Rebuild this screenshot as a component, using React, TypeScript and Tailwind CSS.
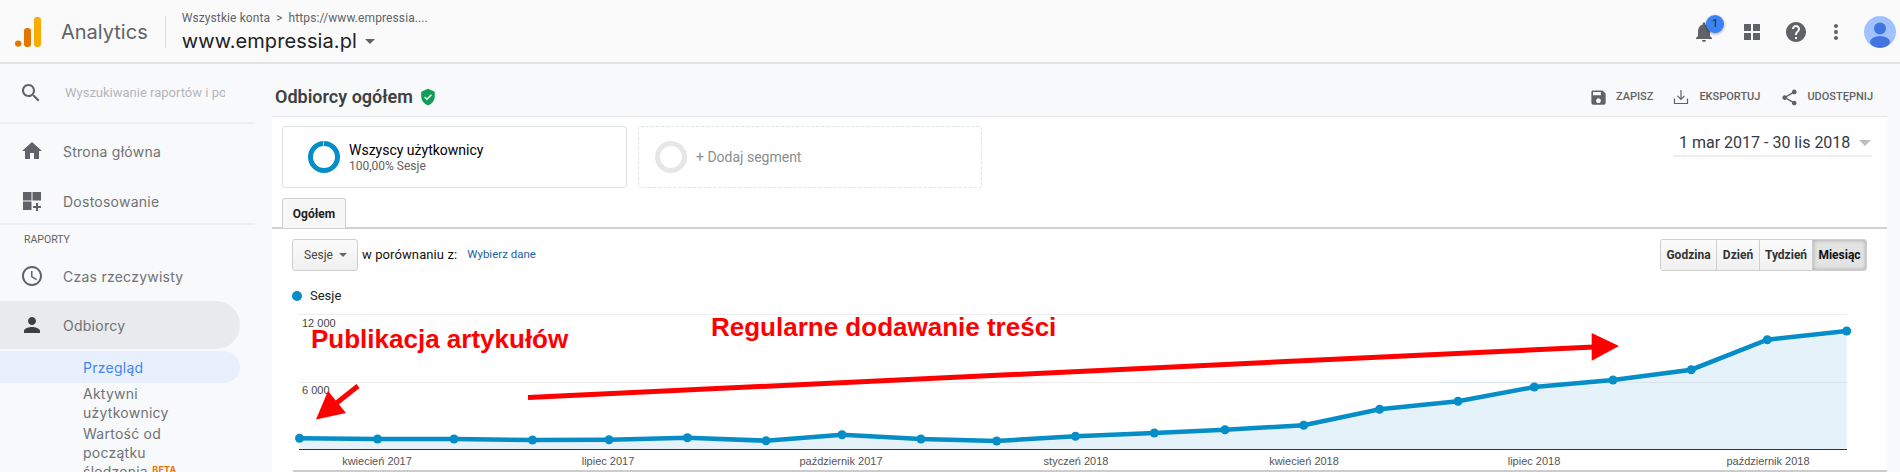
import React from 'react';

const gsans = "font-['Inter','Noto_Sans',sans-serif]";
const roboto = "font-['Roboto','Liberation_Sans',sans-serif]";

const points: [number, number][] = [
  [299.5, 438.3], [377.6, 439], [454, 439], [532.5, 440], [609, 439.7], [687.4, 437.7], [766, 440.7],
  [842, 434.7], [921, 439], [996.7, 441], [1075.5, 436.3], [1154.3, 433], [1225, 429.7], [1303.7, 425.3],
  [1379.6, 409.3], [1458, 401.3], [1534.3, 387], [1613, 380], [1691.3, 369.7], [1767.3, 339.7], [1846.7, 331],
];

const axisLabels: [string, number][] = [
  ['kwiecień 2017', 377], ['lipiec 2017', 608], ['październik 2017', 841], ['styczeń 2018', 1076],
  ['kwiecień 2018', 1304], ['lipiec 2018', 1534], ['październik 2018', 1768],
];

function Icon({ d, className }: { d: string; className: string }) {
  return (
    <svg viewBox="0 0 24 24" className={className} fill="currentColor">
      <path d={d} />
    </svg>
  );
}

function NavRow({ icon, label, className = '' }: { icon: React.ReactNode; label: string; className?: string }) {
  return (
    <div className={`flex items-center w-[240px] ${className}`}>
      <div className="w-[63px] pl-[20px] flex-none text-[#5f6368]">{icon}</div>
      <span className={`${gsans} text-[14px] tracking-[0.25px] text-[#6f7276]`}>{label}</span>
    </div>
  );
}

function Sidebar() {
  return (
    <aside className="w-[272px] flex-none pr-[17px]">
      <div className="h-[60px] flex items-center border-b-2 border-[#eceef1]">
        <Icon
          className="w-[24px] h-[24px] ml-[19px] text-[#5f6368]"
          d="M15.5 14h-.79l-.28-.27C15.41 12.59 16 11.11 16 9.5 16 5.91 13.09 3 9.5 3S3 5.91 3 9.5 5.91 16 9.5 16c1.61 0 3.09-.59 4.23-1.57l.27.28v.79l5 4.99L20.49 19l-4.99-5zm-6 0C7.01 14 5 11.99 5 9.5S7.01 5 9.5 5 14 7.01 14 9.5 11.99 14 9.5 14z"
        />
        <span className={`${roboto} ml-[22px] w-[160px] overflow-hidden whitespace-nowrap text-[13px] text-[#b4b6b9]`}>
          Wyszukiwanie raportów i pomocy
        </span>
      </div>
      <div className="h-[101px] pt-[2px] border-b-2 border-[#eceef1]">
        <NavRow
          className="h-[50px]"
          label="Strona główna"
          icon={<Icon className="w-[24px] h-[24px]" d="M10 20v-6h4v6h5v-8h3L12 3 2 12h3v8z" />}
        />
        <NavRow
          className="h-[50px]"
          label="Dostosowanie"
          icon={<Icon className="w-[24px] h-[24px]" d="M3 3h8.5v8.5H3zM12.5 3H21v8.5h-8.5zM3 12.5h8.5V21H3zM16 14h2v3h3v2h-3v3h-2v-3h-3v-2h3z" />}
        />
      </div>
      <div className={`${roboto} h-[30px] flex items-center pl-[24px] text-[10.5px] text-[#5f6368]`}>RAPORTY</div>
      <NavRow
        className="h-[42px] mb-[4px]"
        label="Czas rzeczywisty"
        icon={
          <Icon
            className="w-[24px] h-[24px]"
            d="M11.99 2C6.47 2 2 6.48 2 12s4.47 10 9.99 10C17.52 22 22 17.52 22 12S17.52 2 11.99 2zM12 20c-4.42 0-8-3.58-8-8s3.58-8 8-8 8 3.58 8 8-3.58 8-8 8zm.5-13H11v6l5.25 3.15.75-1.23-4.5-2.67z"
          />
        }
      />
      <NavRow
        className="h-[48px] bg-[#e8eaed] rounded-r-[24px]"
        label="Odbiorcy"
        icon={
          <span className="text-[#3c4043] block">
            <Icon className="w-[24px] h-[24px]" d="M12 12c2.21 0 4-1.79 4-4s-1.79-4-4-4-4 1.79-4 4 1.79 4 4 4zm0 2c-2.67 0-8 1.34-8 4v2h16v-2c0-2.66-5.33-4-8-4z" />
          </span>
        }
      />
      <div className={`${gsans} mt-[2px] h-[32px] w-[240px] flex items-center pl-[83px] rounded-r-[16px] bg-[#e8f0fe] text-[14px] tracking-[0.25px] text-[#4285f4]`}>
        Przegląd
      </div>
      <div className={`${gsans} pl-[83px] pt-[1px] text-[14px] tracking-[0.25px] leading-[19px] text-[#6f7276] w-[200px]`}>
        <div>Aktywni<br />użytkownicy</div>
        <div className="mt-[2px]">
          Wartość od<br />początku<br />śledzenia <sup className="text-[9px] font-bold text-[#e8710a]">BETA</sup>
        </div>
      </div>
    </aside>
  );
}

function Chart() {
  return (
    <svg viewBox="272 305 1615 167" className="w-[1615px] h-[167px] block flex-none">
      <path d="M299 314.5H1847M299 382.5H1847" stroke="#ececec" strokeWidth="1" />
      <path
        d={`M299.5 449 L${points.map(p => p.join(' ')).join(' L')} L1846.7 449 Z`}
        fill="#e5f2f9"
      />
      <path d="M1440 382.5H1847" stroke="#d8e4ea" strokeWidth="1" />
      <path d="M299 449.5H1847" stroke="#333" strokeWidth="1" />
      <path d="M293 471H1887" stroke="#ccc" strokeWidth="2" />
      <text x="302" y="327" fontFamily="Liberation Sans, sans-serif" fontSize="11" fill="#444">12 000</text>
      <text x="302" y="394" fontFamily="Liberation Sans, sans-serif" fontSize="11" fill="#444">6 000</text>
      {axisLabels.map(([label, x]) => (
        <text key={label} x={x} y="465" textAnchor="middle" fontFamily="Liberation Sans, sans-serif" fontSize="11" fill="#555">
          {label}
        </text>
      ))}
      <polyline points={points.map(p => p.join(',')).join(' ')} fill="none" stroke="#058dc7" strokeWidth="4.5" />
      {points.map(([x, y]) => (
        <circle key={x} cx={x} cy={y} r="4.5" fill="#058dc7" />
      ))}
      {/* hand-drawn annotations from the screenshot */}
      <path d="M358 386 L334 405" stroke="#ff0000" strokeWidth="5" />
      <path d="M316 419.5 L346 413 L328 391 Z" fill="#ff0000" />
      <path d="M528 397.5 L1594 347" stroke="#ff0000" strokeWidth="5" />
      <path d="M1591.7 333 L1619 346 L1591.7 360.7 Z" fill="#ff0000" />
      <text x="311" y="348" fontFamily="Liberation Sans, sans-serif" fontWeight="700" fontSize="26" fill="#ff0000">Publikacja artykułów</text>
      <text x="711" y="336" fontFamily="Liberation Sans, sans-serif" fontWeight="700" fontSize="26" fill="#ff0000">Regularne dodawanie treści</text>
    </svg>
  );
}

function Action({ icon, label, gap }: { icon: React.ReactNode; label: string; gap: string }) {
  return (
    <div className={`flex items-center text-[#5f6368] ${gap}`}>
      {icon}
      <span className={`${roboto} text-[11px] font-medium`}>{label}</span>
    </div>
  );
}

export default function App() {
  return (
    <div className={`${roboto} w-[1900px] h-[472px] overflow-hidden bg-[#f8f9fa] flex flex-col`}>
      <header className="h-[64px] flex-none flex items-center pt-[2px] border-b-2 border-[#e2e3e5] bg-[#fafafb]">
        <svg viewBox="0 0 26 30" className="w-[26px] h-[30px] ml-[15px] flex-none">
          <circle cx="3.2" cy="26.6" r="3.2" fill="#e37400" />
          <rect x="9" y="11" width="7" height="19" rx="3" fill="#e37400" />
          <rect x="19" y="0" width="7" height="30" rx="3" fill="#f9ab00" />
        </svg>
        <span className={`${gsans} ml-[20px] text-[20px] text-[#5f6368]`}>Analytics</span>
        <div className="w-px h-[32px] bg-[#dadce0] ml-[17px]" />
        <div className="ml-[16px] flex flex-col">
          <div className="flex items-center text-[12px] leading-[16px] text-[#5f6368] tracking-[0.1px]">
            <span>Wszystkie konta</span>
            <span className="mx-[6px] text-[12px]">&gt;</span>
            <span>https://www.empressia....</span>
          </div>
          <div className="flex items-center mt-[2px]">
            <span className={`${gsans} text-[20px] leading-[26px] text-[#202124] tracking-[0.1px]`}>www.empressia.pl</span>
            <div className="ml-[8px] w-0 h-0 border-x-[5px] border-x-transparent border-t-[5px] border-t-[#5f6368]" />
          </div>
        </div>
        <div className="ml-auto flex items-center text-[#5f6368]">
          <div className="relative w-[24px] h-[24px]">
            <Icon
              className="w-[24px] h-[24px]"
              d="M12 22c1.1 0 2-.9 2-2h-4c0 1.1.89 2 2 2zm6-6v-5c0-3.07-1.64-5.64-4.5-6.32V4c0-.83-.67-1.5-1.5-1.5s-1.5.67-1.5 1.5v.68C7.63 5.36 6 7.92 6 11v5l-2 2v1h16v-1l-2-2z"
            />
            <span className="absolute left-[14px] top-[-5px] w-[18px] h-[18px] rounded-full bg-[#3b82f6] text-[#1f2937] text-[11px] leading-[18px] text-center shadow-[0_1px_3px_rgba(0,0,0,0.4)]">
              1
            </span>
          </div>
          <Icon className="w-[24px] h-[24px] ml-[24px]" d="M4 4h7v7H4zM13 4h7v7h-7zM4 13h7v7H4zM13 13h7v7h-7z" />
          <Icon
            className="w-[24px] h-[24px] ml-[20px]"
            d="M12 2C6.48 2 2 6.48 2 12s4.48 10 10 10 10-4.48 10-10S17.52 2 12 2zm1 17h-2v-2h2v2zm2.07-7.75l-.9.92C13.45 12.9 13 13.5 13 15h-2v-.5c0-1.1.45-2.1 1.17-2.83l1.24-1.26c.37-.36.59-.86.59-1.41 0-1.1-.9-2-2-2s-2 .9-2 2H8c0-2.21 1.79-4 4-4s4 1.79 4 4c0 .88-.36 1.68-.93 2.25z"
          />
          <Icon
            className="w-[24px] h-[24px] ml-[16px]"
            d="M12 8c1.1 0 2-.9 2-2s-.9-2-2-2-2 .9-2 2 .9 2 2 2zm0 2c-1.1 0-2 .9-2 2s.9 2 2 2 2-.9 2-2-.9-2-2-2zm0 6c-1.1 0-2 .9-2 2s.9 2 2 2 2-.9 2-2-.9-2-2-2z"
          />
          <svg viewBox="0 0 32 32" className="w-[32px] h-[32px] ml-[16px] mr-[4px]">
            <defs>
              <clipPath id="avatar-clip">
                <circle cx="16" cy="16" r="16" />
              </clipPath>
            </defs>
            <circle cx="16" cy="16" r="16" fill="#a0c3ff" />
            <g clipPath="url(#avatar-clip)" fill="#4374e0">
              <circle cx="16" cy="12.5" r="6" />
              <ellipse cx="16" cy="26" rx="10" ry="6" />
            </g>
          </svg>
        </div>
      </header>

      <div className="flex flex-1 min-h-0">
        <Sidebar />
        <main className="w-[1615px] flex-none flex flex-col">
          <div className="h-[53px] flex-none pt-[14px] pl-[3px] pr-[14px] flex items-center justify-between border-b border-[#e6e7e9]">
            <div className="flex items-center gap-[6px]">
              <h1 className="text-[18px] font-semibold text-[#3c4043] leading-[24px]">Odbiorcy ogółem</h1>
              <svg viewBox="0 0 24 24" className="w-[18px] h-[18px]">
                <path d="M12 1L3 5v6c0 5.55 3.84 10.74 9 12 5.16-1.26 9-6.45 9-12V5l-9-4z" fill="#0f9d58" />
                <path d="M7.5 12l3 3 6-6" fill="none" stroke="#fff" strokeWidth="2" />
              </svg>
            </div>
            <div className="flex items-center gap-[20px]">
              <Action
                label="ZAPISZ"
                gap="gap-[8px]"
                icon={<Icon className="w-[19px] h-[19px]" d="M17 3H5c-1.11 0-2 .9-2 2v14c0 1.1.89 2 2 2h14c1.1 0 2-.9 2-2V7l-4-4zm-5 16c-1.66 0-3-1.34-3-3s1.34-3 3-3 3 1.34 3 3-1.34 3-3 3zm3-10H5V5h10v4z" />}
              />
              <Action
                label="EKSPORTUJ"
                gap="gap-[10px]"
                icon={
                  <svg viewBox="0 0 16 16" className="w-[16px] h-[16px]" fill="none" stroke="currentColor" strokeWidth="1.2">
                    <path d="M8 1v9M4.5 6.8 8 10.3l3.5-3.5M1.5 9.5v5h13v-5" />
                  </svg>
                }
              />
              <Action
                label="UDOSTĘPNIJ"
                gap="gap-[8px]"
                icon={<Icon className="w-[19px] h-[19px]" d="M18 16.08c-.76 0-1.44.3-1.96.77L8.91 12.7c.05-.23.09-.46.09-.7s-.04-.47-.09-.7l7.05-4.11c.54.5 1.25.81 2.04.81 1.66 0 3-1.34 3-3s-1.34-3-3-3-3 1.34-3 3c0 .24.04.47.09.7L8.04 9.81C7.5 9.31 6.79 9 6 9c-1.66 0-3 1.34-3 3s1.34 3 3 3c.79 0 1.5-.31 2.04-.81l7.12 4.16c-.05.21-.08.43-.08.65 0 1.61 1.31 2.92 2.92 2.92 1.61 0 2.92-1.31 2.92-2.92s-1.31-2.92-2.92-2.92z" />}
              />
            </div>
          </div>

          <div className="flex-1 min-h-0 bg-white flex flex-col">
            <div className="flex justify-between pt-[9px] pl-[10px] pr-[15px] flex-none">
              <div className="flex gap-[11px]">
                <div className="w-[345px] h-[62px] rounded-[3px] border border-[#dfe1e5] flex items-center pl-[25px]">
                  <div className="relative w-[32px] h-[32px] rounded-full border-[5px] border-[#058dc7] flex-none">
                    <span className="absolute left-[10px] top-[-5px] w-px h-[5px] bg-[#9fd2e8]" />
                  </div>
                  <div className="ml-[9px]">
                    <div className="text-[14px] leading-[18px] text-black">Wszyscy użytkownicy</div>
                    <div className="text-[12px] leading-[14px] text-[#616161]">100,00% Sesje</div>
                  </div>
                </div>
                <div className="w-[344px] h-[62px] rounded-[3px] border border-dashed border-[#dfe1e5] flex items-center pl-[16px]">
                  <div className="w-[32px] h-[32px] rounded-full border-[5px] border-[#e6e6e6] flex-none" />
                  <div className="ml-[9px] text-[14px] text-[#8a8d91]">+ Dodaj segment</div>
                </div>
              </div>
              <div className="mt-[5px] h-[24px] w-[193px] border-b-2 border-[#eeeeee] flex items-center justify-between box-content pl-[5px]">
                <span className="text-[16px] text-[#333b44] whitespace-nowrap">1 mar 2017 - 30 lis 2018</span>
                <div className="w-0 h-0 mr-[1px] border-x-[6.5px] border-x-transparent border-t-[6px] border-t-[#bdbdbd]" />
              </div>
            </div>

            <div className="mt-[10px] h-[31px] flex-none border-b-2 border-[#d0d0d0] pl-[10px]">
              <div className="w-[64px] h-[30px] bg-[#f7f7f7] border border-b-0 border-[#d0d0d0] rounded-t-[3px] flex items-center justify-center text-[12px] font-bold text-[#222]">
                Ogółem
              </div>
            </div>

            <div className="mt-[10px] pl-[20px] pr-[20px] flex-none flex items-center justify-between">
              <div className="flex items-center">
                <div className="w-[66px] h-[32px] flex items-center justify-between pl-[11px] pr-[10px] rounded-[3px] border border-[#cfcfcf] bg-gradient-to-b from-[#fbfbfb] to-[#f0f0f0] text-[12px] text-[#444]">
                  Sesje
                  <div className="w-0 h-0 border-x-[4px] border-x-transparent border-t-[4px] border-t-[#666]" />
                </div>
                <span className="ml-[4px] text-[13px] tracking-[0.1px] text-[#111]">w porównaniu z:</span>
                <span className="ml-[10px] text-[11.5px] text-[#1a5fa8]">Wybierz dane</span>
              </div>
              <div className="flex h-[32px] w-[207px] rounded-[3px] border border-[#cfcfcf] text-[12px] font-bold text-[#333] overflow-hidden">
                <div className="w-[56px] flex items-center justify-center border-r border-[#cfcfcf] bg-gradient-to-b from-[#fbfbfb] to-[#f0f0f0]">Godzina</div>
                <div className="w-[43px] flex items-center justify-center border-r border-[#cfcfcf] bg-gradient-to-b from-[#fbfbfb] to-[#f0f0f0]">Dzień</div>
                <div className="w-[53px] flex items-center justify-center border-r border-[#cfcfcf] bg-gradient-to-b from-[#fbfbfb] to-[#f0f0f0]">Tydzień</div>
                <div className="flex-1 flex items-center justify-center bg-[#e3e3e3] text-[#111] shadow-[inset_0_0_4px_rgba(0,0,0,0.3)]">Miesiąc</div>
              </div>
            </div>

            <div className="mt-[16px] h-[18px] pl-[20px] flex-none flex items-center">
              <div className="w-[10px] h-[10px] rounded-full bg-[#058dc7]" />
              <span className="ml-[8px] text-[13px] text-[#222]">Sesje</span>
            </div>
            <Chart />
          </div>
        </main>
      </div>
    </div>
  );
}
